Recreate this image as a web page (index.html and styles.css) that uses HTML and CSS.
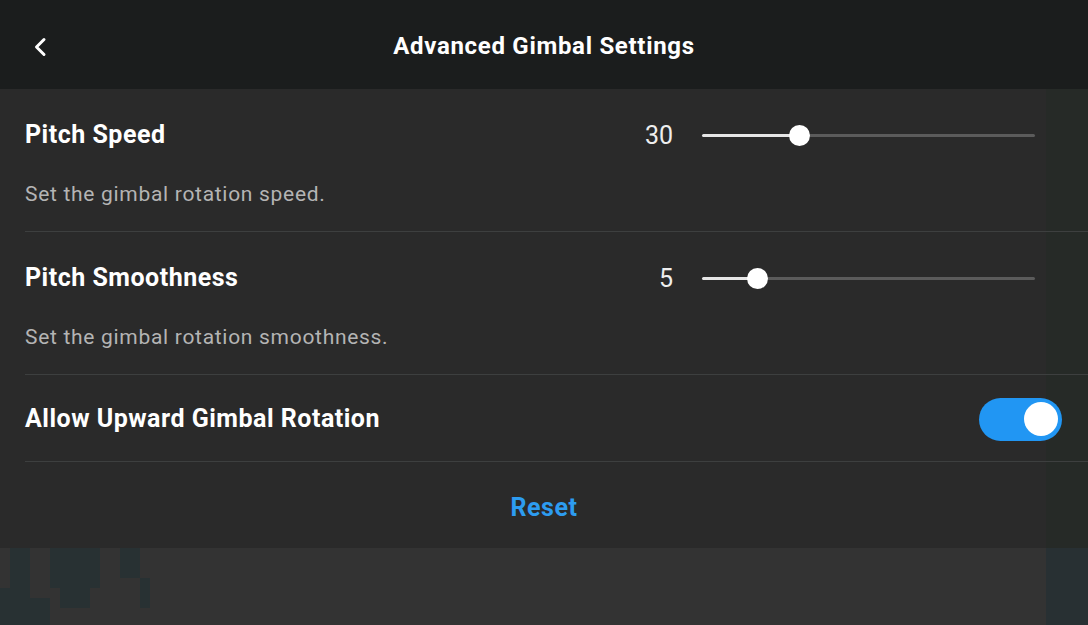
FILE: index.html
```html
<!DOCTYPE html>
<html lang="en">
<head>
<meta charset="utf-8">
<title>Advanced Gimbal Settings</title>
<link rel="stylesheet" href="styles.css">
</head>
<body>
<header class="topbar">
  <button class="back" aria-label="Back">
    <svg width="14" height="20" viewBox="0 0 14 20"><path d="M11 2.5 L3.5 10 L11 17.5" fill="none" stroke="#ffffff" stroke-width="3" stroke-linecap="round" stroke-linejoin="round"/></svg>
  </button>
  <h1 class="title">Advanced Gimbal Settings</h1>
</header>
<main class="panel">
  <section class="row row-slider">
    <div class="row-top">
      <span class="label">Pitch Speed</span>
      <span class="value">30</span>
      <div class="slider">
        <span class="fill" style="width:97px"></span>
        <span class="thumb"></span>
        <span class="rest"></span>
      </div>
    </div>
    <p class="desc">Set the gimbal rotation speed.</p>
  </section>
  <section class="row row-slider">
    <div class="row-top">
      <span class="label">Pitch Smoothness</span>
      <span class="value">5</span>
      <div class="slider">
        <span class="fill" style="width:55px"></span>
        <span class="thumb"></span>
        <span class="rest"></span>
      </div>
    </div>
    <p class="desc">Set the gimbal rotation smoothness.</p>
  </section>
  <section class="row row-toggle">
    <span class="label">Allow Upward Gimbal Rotation</span>
    <span class="toggle on"><span class="knob"></span></span>
  </section>
  <div class="reset-wrap">
    <button class="reset">Reset</button>
  </div>
</main>
<footer class="bottom">
  <div class="noise">
    <span class="b b1"></span><span class="b b2"></span><span class="b b3"></span><span class="b b4"></span><span class="b b5"></span><span class="b b6"></span><span class="b b7"></span>
  </div>
  <div class="strip"></div>
</footer>
</body>
</html>
```
FILE: styles.css
```css
* { box-sizing: border-box; }
html, body { margin: 0; padding: 0; }
body {
  width: 1088px;
  height: 625px;
  overflow: hidden;
  background: #333333;
  font-family: Roboto, "Liberation Sans", Arial, sans-serif;
  color: #ffffff;
}
.topbar {
  height: 89px;
  background: #1b1d1d;
  display: flex;
  align-items: center;
  justify-content: center;
  position: relative;
  padding-top: 2px;
}
.back {
  position: absolute;
  left: 32px;
  top: 36px;
  background: none;
  border: 0;
  padding: 0;
  width: 16px;
  height: 22px;
  display: flex;
  align-items: center;
  justify-content: center;
}
.title {
  margin: 0;
  font-size: 24px;
  font-weight: 700;
  letter-spacing: 0.7px;
  line-height: 30px;
}
.panel {
  height: 459px;
  background: linear-gradient(to right, #2a2a2a 0, #2a2a2a 1046px, #262a27 1046px);
}
.row {
  margin-left: 25px;
  border-bottom: 1px solid #3d3f3f;
}
.row-slider {
  height: 143px;
  padding-top: 31px;
}
.row-top {
  display: flex;
  align-items: center;
  height: 30px;
}
.label {
  flex: 1;
  font-size: 25px;
  font-weight: 700;
  letter-spacing: 0.5px;
  line-height: 30px;
  color: #ffffff;
}
.value {
  font-size: 25px;
  font-weight: 400;
  color: #eeeeee;
  margin-right: 29px;
}
.slider {
  width: 333px;
  height: 22px;
  margin-right: 53px;
  display: flex;
  align-items: center;
}
.fill {
  height: 3px;
  background: #e6e6e6;
  border-radius: 2px 0 0 2px;
}
.thumb {
  width: 21px;
  height: 21px;
  border-radius: 50%;
  background: #ffffff;
  margin: 0 -10.5px;
  position: relative;
  z-index: 1;
  flex: none;
}
.rest {
  flex: 1;
  height: 3px;
  background: #5b5b5b;
  border-radius: 0 2px 2px 0;
}
.desc {
  margin: 32px 0 0;
  font-size: 21px;
  letter-spacing: 0.7px;
  line-height: 24px;
  color: #b4b4b4;
}
.row-toggle {
  height: 87px;
  display: flex;
  align-items: center;
  padding-top: 2px;
}
.toggle {
  width: 83px;
  height: 43px;
  border-radius: 22px;
  background: #2196f3;
  display: flex;
  align-items: center;
  justify-content: flex-end;
  padding: 4px;
  margin-right: 26px;
}
.knob {
  width: 34px;
  height: 34px;
  border-radius: 50%;
  background: #ffffff;
}
.reset-wrap {
  height: 86px;
  display: flex;
  align-items: center;
  justify-content: center;
  padding-top: 4px;
}
.reset {
  background: none;
  border: 0;
  padding: 0;
  font-family: Roboto, "Liberation Sans", Arial, sans-serif;
  font-size: 25px;
  font-weight: 700;
  letter-spacing: 0.5px;
  color: #2d9cf0;
}
.bottom {
  height: 77px;
  display: flex;
  justify-content: space-between;
}
.noise {
  width: 160px;
  display: grid;
  grid-template-columns: repeat(16, 10px);
  grid-template-rows: repeat(8, 10px);
}
.b { background: #283133; }
.b1 { grid-column: 2 / 4; grid-row: 1 / 9; }
.b2 { grid-column: 6 / 11; grid-row: 1 / 5; }
.b3 { grid-column: 7 / 10; grid-row: 5 / 7; }
.b4 { grid-column: 13 / 15; grid-row: 1 / 4; }
.b5 { grid-column: 15 / 16; grid-row: 4 / 7; }
.b6 { grid-column: 1 / 2; grid-row: 5 / 9; }
.b7 { grid-column: 4 / 6; grid-row: 6 / 9; }
.strip {
  width: 42px;
  background: #283033;
}
```
